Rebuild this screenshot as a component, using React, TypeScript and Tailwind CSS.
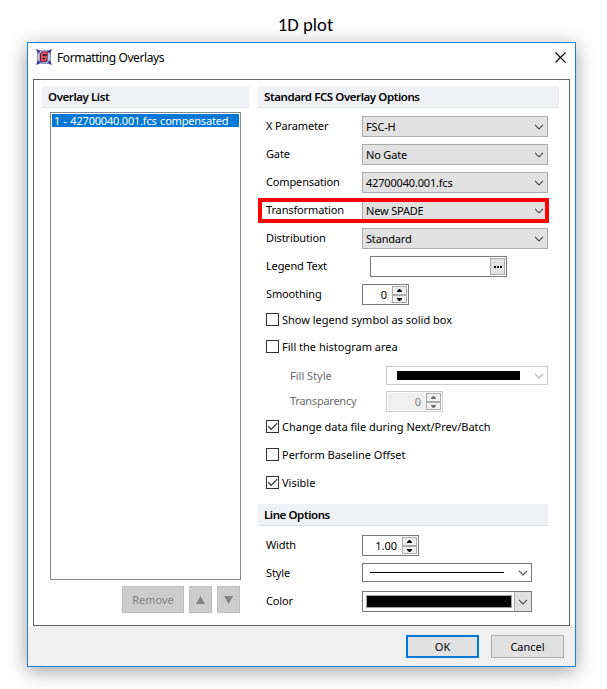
import { useState } from "react";
import type { ReactNode } from "react";

function AppIcon() {
  return (
    <svg width="16" height="16" viewBox="0 0 16 16">
      <path d="M0 0L4 1.5H12L16 0L14.6 4V12L16 16L12 14.5H4L0 16L1.4 12V4Z" fill="#4a3a9c" />
      <path d="M5 2H11L14 5V11L11 14H5L2 11V5Z" fill="#b9cfe6" />
      <path d="M6 2.5H12V6H11.6V11.4L10 13.3H5L3.8 12V5.2Z" fill="#3c2040" />
      <path
        d="M10.6 5.6V4.2H7L5.8 5.6V11.3H9L10 10.2V7.8H6.4"
        fill="none"
        stroke="#f4505a"
        strokeWidth="1.8"
      />
    </svg>
  );
}

function Chevron({ className = "text-[#505050]" }: { className?: string }) {
  return (
    <svg width="10" height="6" viewBox="0 0 10 6" className={`shrink-0 ${className}`}>
      <path d="M1 0.8L5 4.8L9 0.8" fill="none" stroke="currentColor" strokeWidth="1.2" />
    </svg>
  );
}

function SectionTitle({ children, className }: { children: ReactNode; className: string }) {
  return (
    <div
      className={`h-[22px] border-b border-[#dfdfe6] bg-[#f0f1f5] pl-1.5 text-[11.5px] leading-[22px] font-semibold tracking-[-0.42px] ${className}`}
    >
      {children}
    </div>
  );
}

function Row({ label, children }: { label: string; children: ReactNode }) {
  return (
    <div className="relative flex h-7 items-start pl-2">
      <span className="w-24 shrink-0 leading-[20px] tracking-[-0.14px]">{label}</span>
      {children}
    </div>
  );
}

function Select({ value }: { value: string }) {
  return (
    <button className="flex h-[21px] w-[186px] items-center justify-between border border-[#acacac] bg-[#e1e1e1] pr-[3px] pl-[3px] leading-[19px] tracking-[-0.18px]">
      <span>{value}</span>
      <Chevron />
    </button>
  );
}

function Spinner({ value, className, disabled }: { value: string; className: string; disabled?: boolean }) {
  const tone = disabled ? "border-[#cccccc]" : "border-[#7a7a7a]";
  const arrow = disabled ? "fill-[#6d6d6d]" : "fill-black";
  return (
    <div className={`flex h-[21px] justify-end border bg-white p-px ${tone} ${className}`}>
      <span className={`flex-1 pr-[5px] text-right leading-[17px] ${disabled ? "bg-[#f0f0f0] text-[#838383]" : ""}`}>
        {value}
      </span>
      <div className="flex w-[15px] flex-col">
        <button className="flex h-[9px] items-center justify-center border border-[#acacac] bg-[#f0f0f0]">
          <svg width="5" height="3" viewBox="0 0 5 3" className={arrow}>
            <path d="M0 3V2L2 0H3L5 2V3Z" />
          </svg>
        </button>
        <button className="flex h-2 items-center justify-center border border-[#acacac] bg-[#f0f0f0]">
          <svg width="5" height="3" viewBox="0 0 5 3" className={arrow}>
            <path d="M0 0V1L2 3H3L5 1V0Z" />
          </svg>
        </button>
      </div>
    </div>
  );
}

function CheckBox({ label, initial = false }: { label: string; initial?: boolean }) {
  const [checked, setChecked] = useState(initial);
  return (
    <button className="flex h-[13px] items-center gap-[3px] pl-2" onClick={() => setChecked(!checked)}>
      <span className="h-[13px] w-[13px] border border-[#333333] bg-white">
        {checked && (
          <svg width="11" height="11" viewBox="0 0 11 11">
            <path d="M1.2 5.3L4.2 8.3L10 2.3" fill="none" stroke="#404040" strokeWidth="1.3" />
          </svg>
        )}
      </span>
      <span className="leading-[13px]">{label}</span>
    </button>
  );
}

function OverlayList() {
  return (
    <div className="w-[207px]">
      <SectionTitle className="w-[207px]">Overlay List</SectionTitle>
      <div className="mt-1 ml-2 h-[468px] w-[191px] border border-[#828790] p-px">
        <div className="h-[13px] bg-[#0078d7] pl-0.5 leading-[13px] tracking-[-0.2px] text-white [word-spacing:0.8px]">
          1 - 42700040.001.fcs compensated
        </div>
      </div>
      <div className="mt-1.5 flex justify-end gap-[5px] pr-[9px] text-[#838383]">
        <button className="h-[27px] w-[62px] border border-[#bfbfbf] bg-[#cccccc] pt-px">Remove</button>
        <button className="flex h-[27px] w-[23px] items-center justify-center border border-[#bfbfbf] bg-[#cccccc]">
          <svg width="9" height="8" viewBox="0 0 9 8" fill="currentColor">
            <path d="M0 8L4.5 0L9 8Z" />
          </svg>
        </button>
        <button className="flex h-[27px] w-[23px] items-center justify-center border border-[#bfbfbf] bg-[#cccccc]">
          <svg width="9" height="8" viewBox="0 0 9 8" fill="currentColor">
            <path d="M0 0L4.5 8L9 0Z" />
          </svg>
        </button>
      </div>
    </div>
  );
}

function OverlayOptions() {
  return (
    <div className="w-[301px]">
      <SectionTitle className="w-[301px]">Standard FCS Overlay Options</SectionTitle>
      <div className="mt-2">
        <Row label="X Parameter">
          <Select value="FSC-H" />
        </Row>
        <Row label="Gate">
          <Select value="No Gate" />
        </Row>
        <Row label="Compensation">
          <Select value="42700040.001.fcs" />
        </Row>
        <Row label="Transformation">
          <Select value="New SPADE" />
          <div className="absolute -top-0.5 left-0 h-[25px] w-[291px] border-4 border-[#ff0000]" />
        </Row>
        <Row label="Distribution">
          <Select value="Standard" />
        </Row>
        <Row label="Legend Text">
          <div className="ml-2 flex h-[21px] w-[137px] justify-end border border-[#7a7a7a] bg-white p-px">
            <button className="flex h-[17px] w-[15px] items-center justify-center gap-px border border-[#acacac] bg-[#e1e1e1]">
              <span className="h-0.5 w-0.5 bg-black" />
              <span className="h-0.5 w-0.5 bg-black" />
              <span className="h-0.5 w-0.5 bg-black" />
            </button>
          </div>
        </Row>
        <Row label="Smoothing">
          <Spinner value="0" className="w-[47px]" />
        </Row>
      </div>

      <div className="mt-px flex flex-col gap-3.5">
        <CheckBox label="Show legend symbol as solid box" />
        <CheckBox label="Fill the histogram area" />
      </div>

      <div className="mt-[13px] flex h-[25px] items-start pl-8 text-[#6d6d6d]">
        <span className="w-24 leading-[20px]">Fill Style</span>
        <div className="flex h-[19px] w-[162px] items-center justify-between border border-[#cccccc] bg-white pr-[3px] pl-2.5">
          <div className="h-[9px] w-[123px] bg-black" />
          <Chevron className="text-[#b0b0b0]" />
        </div>
      </div>
      <div className="flex h-[29px] items-start pl-8 text-[#6d6d6d]">
        <span className="w-24 leading-[20px] tracking-[-0.25px]">Transparency</span>
        <Spinner value="0" className="w-[57px]" disabled />
      </div>

      <div className="flex flex-col gap-[15px]">
        <CheckBox label="Change data file during Next/Prev/Batch" initial />
        <CheckBox label="Perform Baseline Offset" />
        <CheckBox label="Visible" initial />
      </div>

      <div className="mt-[15px]">
        <SectionTitle className="w-[290px]">Line Options</SectionTitle>
      </div>
      <div className="mt-[9px]">
        <Row label="Width">
          <Spinner value="1.00" className="w-[57px]" />
        </Row>
        <Row label="Style">
          <div className="flex h-[19px] w-[170px] items-center justify-between border border-[#7a7a7a] bg-white pr-[3px] pl-[7px]">
            <div className="h-px w-[134px] bg-black" />
            <Chevron />
          </div>
        </Row>
        <Row label="Color">
          <div className="flex h-[21px] w-[170px] border border-[#7a7a7a] bg-white">
            <div className="mt-[3px] ml-[3px] h-[13px] w-[146px] border border-[#a0a0a0] bg-black" />
            <div className="ml-0.5 flex flex-1 items-center justify-center border-l border-[#acacac] bg-[#e1e1e1]">
              <Chevron />
            </div>
          </div>
        </Row>
      </div>
    </div>
  );
}

export default function App() {
  return (
    <div className="h-[689px] w-[607px] overflow-hidden bg-white font-['Noto_Sans',sans-serif] text-[11px] whitespace-nowrap text-black">
      <h1 className="h-[42px] pt-[15px] pl-1 text-center font-['Carlito','Lato',sans-serif] text-[18.67px] leading-5">
        1D plot
      </h1>

      <div className="ml-[27px] h-[625px] w-[549px] border border-[#1883d7] bg-white shadow-[0_4px_18px_rgba(0,0,0,0.38)]">
        <div className="flex h-9 items-start justify-between pt-1.5 pr-[9px] pl-2">
          <div className="flex items-start gap-[5px]">
            <AppIcon />
            <span className="pt-px text-xs leading-4 tracking-[-0.42px]">Formatting Overlays</span>
          </div>
          <svg width="11" height="11" viewBox="0 0 11 11" className="mt-[3px]">
            <path d="M0.5 0.5L10.5 10.5M10.5 0.5L0.5 10.5" stroke="black" strokeWidth="1.1" />
          </svg>
        </div>

        <div className="ml-[5px] flex h-[547px] w-[537px] gap-[9px] border border-[#646464] pt-1.5 pl-2">
          <OverlayList />
          <OverlayOptions />
        </div>

        <div className="flex h-10 justify-end gap-3 bg-[#f0f0f0] pt-[9px] pr-[11px]">
          <button className="h-[23px] w-[73px] border-2 border-[#0078d7] bg-[#e1e1e1] pt-px">OK</button>
          <button className="h-[23px] w-[73px] border border-[#adadad] bg-[#e1e1e1] pt-px">Cancel</button>
        </div>
      </div>
    </div>
  );
}
